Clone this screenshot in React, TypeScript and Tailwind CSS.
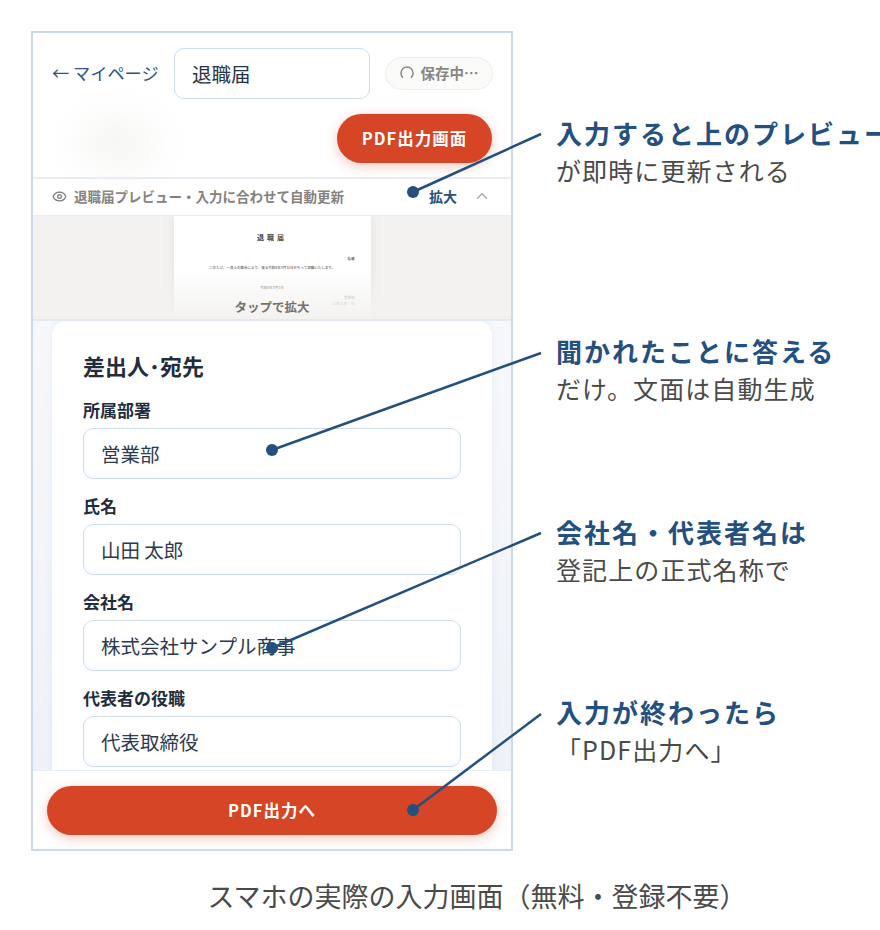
import { Eye, ChevronUp } from 'lucide-react'

const jp = { fontFamily: '"Noto Sans CJK JP", sans-serif' }

const fields = [
  { label: '所属部署', value: '営業部' },
  { label: '氏名', value: '山田 太郎' },
  { label: '会社名', value: '株式会社サンプル商事' },
  { label: '代表者の役職', value: '代表取締役' },
]

const notes = [
  { title: '入力すると上のプレビュー', sub: 'が即時に更新される', className: 'mt-[84px]' },
  { title: '聞かれたことに答える', sub: 'だけ。文面は自動生成', className: 'mt-[145px]' },
  { title: '会社名・代表者名は', sub: '登記上の正式名称で', className: 'mt-[108px]' },
  { title: '入力が終わったら', sub: '「PDF出力へ」', className: 'mt-[107px]' },
]

function Field({ label, value }: { label: string; value: string }) {
  return (
    <div className="mb-[15px]">
      <div className="text-[17px] leading-[24px] font-bold text-[#1f2d3d] mb-[6px]">{label}</div>
      <div className="h-[51px] rounded-[10px] border-[1.5px] border-[#cfdcee] bg-white pl-[17px] flex items-center text-[19.5px] text-[#2c3a4b] shadow-[inset_0_-6px_8px_-6px_rgba(150,170,200,0.15)]">
        {value}
      </div>
    </div>
  )
}

function Phone() {
  return (
    <div className="relative w-[482px] h-[820px] shrink-0 border-2 border-[#cdd9e8] bg-white overflow-hidden flex flex-col">
      {/* faint smudges in the header */}
      <div className="absolute left-[45px] top-[85px] w-[80px] h-[50px] rounded-full bg-[#f6f6f4] blur-[18px]" />

      <div className="relative flex items-start pl-[19px] pt-[15px] h-[146px] border-b-2 border-[#e8edf4] shrink-0">
        <div className="w-[122px] mt-[12px] text-[17.2px] leading-[26px] text-[#2f5580]">← マイページ</div>
        <div className="w-[196px] h-[51px] rounded-[10px] border-[1.5px] border-[#cfdcee] bg-white pl-[17px] flex items-center text-[19.5px] text-[#263445]">
          退職届
        </div>
        <div className="ml-[15px] mt-[9px] w-[108px] h-[33px] rounded-full border-[1.5px] border-[#eeeeec] bg-[#fbfbfa] flex items-center justify-center gap-[7px] pb-[1px] text-[14.5px] font-bold text-[#8a8682]">
          <svg width="14" height="14" viewBox="0 0 14 14" fill="none" className="shrink-0">
            <path d="M2.6 11.2A6 6 0 1 1 11.4 11.2" stroke="#8a8682" strokeWidth="1.5" strokeLinecap="round" />
          </svg>
          <span>保存中⋯</span>
        </div>
        <div className="absolute right-[19px] top-[81px] w-[155px] h-[49px] rounded-full bg-[#d64525] shadow-[0_3px_12px_rgba(214,69,37,0.3)] flex items-center justify-center text-[16.5px] font-bold tracking-[1px] text-white">
          PDF出力画面
        </div>
      </div>

      <div className="flex items-center h-[36px] pl-[19px] pr-[20px] pb-[2px] shrink-0">
        <Eye size={15} strokeWidth={2} className="text-[#7d7975] mr-[7px]" />
        <span className="text-[13.5px] font-bold text-[#85817d]">退職届プレビュー・入力に合わせて自動更新</span>
        <span className="ml-auto text-[14px] font-bold text-[#2b5078] mr-[16px]">拡大</span>
        <ChevronUp size={18} strokeWidth={1.6} className="text-[#a9a6a2]" />
      </div>

      <div className="relative h-[106px] shrink-0 bg-[#f3f2f0] border-t border-b-2 border-t-[#e8edf4] border-b-[#e3e9f2] flex justify-center overflow-hidden">
        <div className="relative w-[197px] h-full bg-white shadow-[0_0_10px_rgba(120,120,120,0.12)] px-[16px] pt-[16px] text-[#555]">
          <div className="text-center text-[7px] leading-[10px] font-medium tracking-[3px] text-[#222]">退職届</div>
          <div className="text-right text-[3.5px] leading-[5px] mt-[14px] text-[#333]">私儀</div>
          <div className="text-center text-[3.5px] leading-[5px] mt-[4px] whitespace-nowrap text-[#444]">このたび、一身上の都合により、来る令和8年3月31日をもって退職いたします。</div>
          <div className="text-center text-[3.5px] leading-[5px] mt-[15px] text-[#555]">令和8年3月1日</div>
          <div className="text-right text-[3.5px] leading-[5px] mt-[5px] text-[#888]">営業部</div>
          <div className="text-right text-[3.5px] leading-[5px] mt-[1px] text-[#888]">山田 太郎　印</div>
        </div>
        <div className="absolute inset-x-0 bottom-0 h-[50px] bg-gradient-to-b from-transparent to-[#f3f2f0]" />
        <div className="absolute inset-x-0 bottom-[2px] text-center text-[12.5px] font-bold text-[#75716d]">タップで拡大</div>
      </div>

      <div className="flex-1 min-h-0 overflow-hidden bg-gradient-to-b from-[#f7f8fb] to-[#eef2f8] px-[19px]">
        <div className="h-[600px] rounded-t-[14px] bg-white px-[31px] pt-[28px] shadow-[0_0_6px_rgba(170,185,210,0.2)]">
          <div className="text-[22px] leading-[32px] font-bold text-[#1f2d3d] mb-[17px]">差出人･宛先</div>
          {fields.map(f => (
            <Field key={f.label} label={f.label} value={f.value} />
          ))}
        </div>
      </div>

      <div className="h-[79px] shrink-0 bg-white border-t border-[#e8edf4] flex justify-center pt-[15px]">
        <div className="w-[450px] h-[49px] rounded-full bg-[#d64525] shadow-[0_3px_12px_rgba(214,69,37,0.3)] flex items-center justify-center text-[16.5px] font-bold tracking-[1px] text-white">
          PDF出力へ
        </div>
      </div>
    </div>
  )
}

export default function App() {
  return (
    <div className="relative w-[880px] h-[930px] bg-white overflow-hidden" style={jp}>
      <div className="flex items-start pl-[31px] pt-[31px]">
        <Phone />
        <div className="ml-[43px] flex flex-col w-[400px] shrink-0">
          {notes.map(n => (
            <div key={n.title} className={n.className}>
              <div className="text-[26px] leading-[36px] font-bold tracking-[2px] text-[#24507f] whitespace-nowrap">{n.title}</div>
              <div className="text-[25px] leading-[36px] mt-[1px] tracking-[1.1px] text-[#4a4a4a] whitespace-nowrap">{n.sub}</div>
            </div>
          ))}
        </div>
      </div>

      <div className="mt-[27px] pl-[74px] text-center text-[27px] leading-[36px] text-[#4a4a4a] whitespace-nowrap">
        スマホの実際の入力画面（無料・登録不要）
      </div>

      {/* callout lines over the screenshot */}
      <svg className="absolute inset-0 pointer-events-none" width="880" height="930" viewBox="0 0 880 930" fill="none">
        <g stroke="#24507f" strokeWidth="2.5">
          <path d="M413 192L541 134" />
          <path d="M272 450L541 353" />
          <path d="M272 648L541 533" />
          <path d="M413 810L541 714" />
        </g>
        <g fill="#24507f">
          <circle cx="413" cy="192" r="6" />
          <circle cx="272" cy="450" r="6" />
          <circle cx="272" cy="648" r="6" />
          <circle cx="413" cy="810" r="6" />
        </g>
      </svg>
    </div>
  )
}
